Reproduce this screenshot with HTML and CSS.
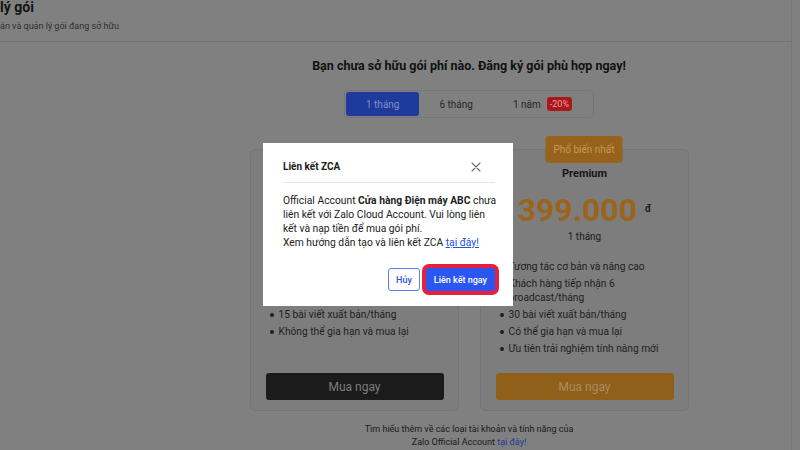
FILE: index.html
```html
<!DOCTYPE html>
<html lang="vi">
<head>
<meta charset="utf-8">
<title>Quản lý gói</title>
<link rel="stylesheet" href="styles.css">
</head>
<body>
<div class="app">
  <header class="page-head">
    <h1 class="page-title">lý gói</h1>
    <p class="page-sub">án và quản lý gói đang sở hữu</p>
  </header>

  <main class="content">
    <h2 class="headline">Bạn chưa sở hữu gói phí nào. Đăng ký gói phù hợp ngay!</h2>

    <div class="tabs">
      <button class="tab active">1 tháng</button>
      <button class="tab">6 tháng</button>
      <button class="tab">1 năm <span class="discount">-20%</span></button>
    </div>

    <div class="plans">
      <section class="plan">
        <h3 class="plan-name">Cơ bản</h3>
        <div class="price"><span class="amount">199.000</span><span class="currency">đ</span></div>
        <div class="period">1 tháng</div>
        <ul class="features">
          <li>Tương tác cơ bản</li>
          <li>Khách hàng tiếp nhận 2 broadcast/tháng</li>
          <li>15 bài viết xuất bản/tháng</li>
          <li>Không thể gia hạn và mua lại</li>
        </ul>
        <button class="buy buy-dark">Mua ngay</button>
      </section>

      <section class="plan">
        <span class="popular">Phổ biến nhất</span>
        <h3 class="plan-name">Premium</h3>
        <div class="price"><span class="amount">399.000</span><span class="currency">đ</span></div>
        <div class="period">1 tháng</div>
        <ul class="features">
          <li>Tương tác cơ bản và nâng cao</li>
          <li>Khách hàng tiếp nhận 6 broadcast/tháng</li>
          <li>30 bài viết xuất bản/tháng</li>
          <li>Có thể gia hạn và mua lại</li>
          <li>Ưu tiên trải nghiệm tính năng mới</li>
        </ul>
        <button class="buy buy-gold">Mua ngay</button>
      </section>
    </div>

    <p class="more">Tìm hiểu thêm về các loại tài khoản và tính năng của<br>Zalo Official Account <a href="#" class="more-link">tại đây!</a></p>
  </main>

  <div class="modal" role="dialog" aria-labelledby="zca-title">
    <div class="modal-head">
      <h3 id="zca-title" class="modal-title">Liên kết ZCA</h3>
      <button class="close" aria-label="Đóng">
        <svg width="10" height="10" viewBox="0 0 10 10"><path d="M1 1 L9 9 M9 1 L1 9" stroke="#6b6b6b" stroke-width="1.1" fill="none" stroke-linecap="round"/></svg>
      </button>
    </div>
    <div class="modal-body">
      <p>Official Account <b>Cửa hàng Điện máy ABC</b> chưa liên kết với Zalo Cloud Account. Vui lòng liên kết và nạp tiền để mua gói phí.<br>Xem hướng dẫn tạo và liên kết ZCA <a href="#" class="link">tại đây!</a></p>
    </div>
    <div class="modal-foot">
      <button class="btn btn-outline">Hủy</button>
      <button class="btn btn-primary">Liên kết ngay</button>
    </div>
  </div>
</div>
</body>
</html>
```

FILE: styles.css
```css
* { box-sizing: border-box; }

html, body {
  margin: 0;
  padding: 0;
}

body {
  width: 800px;
  height: 450px;
  overflow: hidden;
  background: #808080;
  font-family: Roboto, "Noto Sans", "Liberation Sans", sans-serif;
  color: #1a1a1a;
}

.app {
  position: relative;
  width: 792px;
  height: 450px;
  border-right: 1px solid #777777;
}

/* header */
.page-head {
  height: 42px;
  border-bottom: 1px solid #727272;
}

.page-title {
  margin: 0;
  font-size: 14px;
  line-height: 14px;
  font-weight: 700;
  color: #131313;
}

.page-sub {
  margin: 7px 0 0;
  font-size: 9px;
  line-height: 11px;
  color: #2e2e2e;
}

/* content */
.content {
  width: 660px;
  margin-left: 139px;
  display: flex;
  flex-direction: column;
  align-items: center;
}

.headline {
  margin: 16px 0 0;
  font-size: 12.5px;
  line-height: 16px;
  font-weight: 700;
  color: #111111;
}

.tabs {
  margin-top: 16px;
  display: flex;
  padding: 1px;
  border: 1px solid #767676;
  border-radius: 4px;
}

.tab {
  height: 24px;
  padding: 0 20px;
  border: 0;
  border-radius: 3px;
  background: transparent;
  font-family: inherit;
  font-size: 10px;
  color: #262626;
  display: flex;
  align-items: center;
  gap: 6px;
}

.tab.active {
  background: #1e3a9a;
  color: #7f90c6;
}

.discount {
  background: #ab171b;
  color: #e3a0a0;
  font-size: 9px;
  line-height: 14px;
  padding: 0 3px;
  border-radius: 3px;
}

.plans {
  display: flex;
  gap: 21px;
  margin-top: 31px;
}

.plan {
  position: relative;
  width: 209px;
  height: 262px;
  border: 1px solid #747474;
  border-radius: 6px;
  background: #7d7d7d;
  padding: 16px 14px 10px 15px;
  display: flex;
  flex-direction: column;
  align-items: center;
}

.popular {
  position: absolute;
  top: -14px;
  left: 50%;
  transform: translateX(-50%);
  width: 77px;
  height: 27px;
  border-radius: 3px;
  background: #97621b;
  color: #c49b5f;
  font-size: 10px;
  display: flex;
  align-items: center;
  justify-content: center;
  white-space: nowrap;
}

.plan-name {
  margin: 0;
  font-size: 11px;
  line-height: 16px;
  font-weight: 700;
  color: #161616;
}

.price {
  margin-top: 9px;
  display: flex;
  align-items: center;
  height: 38px;
}

.amount {
  font-size: 32px;
  line-height: 38px;
  font-weight: 700;
  color: #9b641b;
}

.currency {
  margin-left: 8px;
  margin-top: -4px;
  font-size: 10px;
  font-weight: 700;
  color: #1c1c1c;
}

.period {
  margin-top: 1px;
  font-size: 10px;
  line-height: 14px;
  color: #1c1c1c;
}

.features {
  list-style: none;
  margin: 16px 0 0;
  padding: 0;
  align-self: stretch;
  display: flex;
  flex-direction: column;
  gap: 3px;
}

.features li {
  position: relative;
  padding-left: 13px;
  font-size: 10.2px;
  line-height: 14px;
  color: #1e1e1e;
}

.features li::before {
  content: "";
  position: absolute;
  left: 4px;
  top: 5px;
  width: 4px;
  height: 4px;
  border-radius: 50%;
  background: #1e1e1e;
}

.buy {
  margin-top: auto;
  align-self: stretch;
  height: 27px;
  border: 0;
  border-radius: 3px;
  font-family: inherit;
  font-size: 12px;
}

.buy-dark {
  background: #1b1b1b;
  color: #7b7b7b;
}

.buy-gold {
  background: #90601a;
  color: #a98c62;
}

.more {
  margin: 12px 0 0;
  font-size: 9px;
  line-height: 13px;
  text-align: center;
  color: #1a1a1a;
}

.more-link {
  color: #1d3a93;
  text-decoration: none;
}

/* modal */
.modal {
  position: absolute;
  left: 263px;
  top: 143px;
  width: 250px;
  background: #ffffff;
  padding: 0 14px 15px 20px;
}

.modal-head {
  display: flex;
  align-items: center;
  justify-content: space-between;
  margin-right: 4px;
  padding: 16px 0 7px;
  border-bottom: 1px solid #e6e6e6;
}

.modal-title {
  margin: 0;
  font-size: 10px;
  line-height: 16px;
  font-weight: 700;
  color: #1b1b1b;
}

.close {
  margin-right: 14px;
  padding: 0;
  border: 0;
  background: transparent;
  width: 10px;
  height: 10px;
  display: flex;
}

.modal-body p {
  margin: 11px 0 0;
  font-size: 10.3px;
  line-height: 14px;
  color: #222222;
}

.link {
  color: #2150e2;
  text-decoration: underline;
}

.modal-foot {
  margin-top: 18px;
  margin-right: 4px;
  display: flex;
  justify-content: flex-end;
  gap: 6px;
}

.btn {
  height: 23px;
  border-radius: 3px;
  font-family: inherit;
  font-size: 9px;
  font-weight: 500;
  padding: 0 7px;
}

.btn-outline {
  background: #ffffff;
  border: 1px solid #5b80ef;
  color: #2b55e6;
}

.btn-primary {
  background: #2a57f2;
  border: 0;
  color: #ffffff;
  padding: 0 8px;
  box-shadow: 0 0 0 4px #e3213d;
}
```
